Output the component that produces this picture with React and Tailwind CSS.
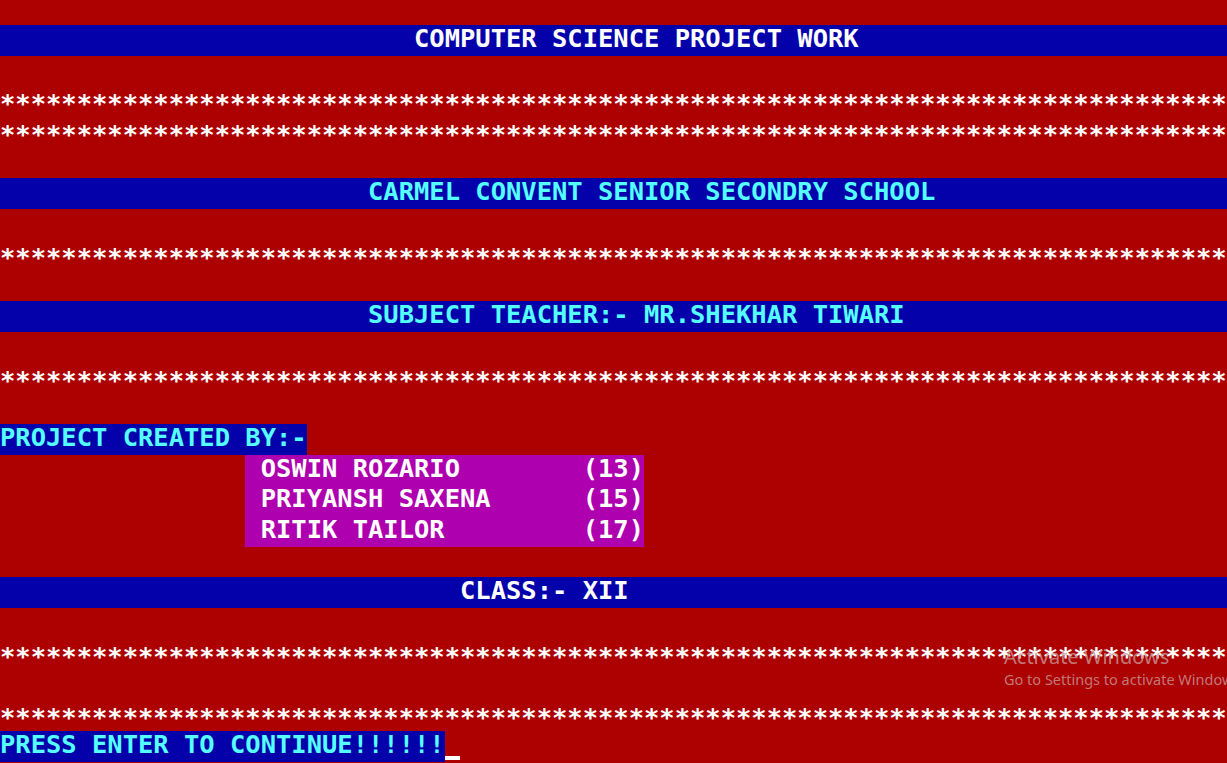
const STARS = '*'.repeat(80)

function Row({ children, className = '' }) {
  return <div className={`h-[30.7px] leading-[27px] whitespace-pre ${className}`}>{children}</div>
}

function Stars() {
  return (
    <Row className="text-white">
      <span className="inline-block translate-y-[4px]">{STARS}</span>
    </Row>
  )
}

const students = [
  ' OSWIN ROZARIO        (13)',
  ' PRIYANSH SAXENA      (15)',
  ' RITIK TAILOR         (17)',
]

export default function App() {
  return (
    <div className="relative w-[1227px] h-[763px] overflow-hidden bg-[#ad0000] pt-[25px] font-['DejaVu_Sans_Mono',monospace] font-bold text-[25.48px]">
      <Row className="bg-[#0400aa] text-white pl-[27ch]">COMPUTER SCIENCE PROJECT WORK</Row>
      <Row />
      <Stars />
      <Stars />
      <Row />
      <Row className="bg-[#0400aa] text-[#55ffff] pl-[24ch]">CARMEL CONVENT SENIOR SECONDRY SCHOOL</Row>
      <Row />
      <Stars />
      <Row />
      <Row className="bg-[#0400aa] text-[#55ffff] pl-[24ch]">SUBJECT TEACHER:- MR.SHEKHAR TIWARI</Row>
      <Row />
      <Stars />
      <Row />
      <Row className="flex">
        <span className="bg-[#0400aa] text-[#55ffff] h-full">PROJECT CREATED BY:-</span>
      </Row>
      {students.map(s => (
        <Row key={s} className="flex pl-[16ch]">
          <span className="bg-[#ae00ae] text-white h-full">{s}</span>
        </Row>
      ))}
      <Row />
      <Row className="bg-[#0400aa] text-white pl-[30ch]">CLASS:- XII</Row>
      <Row />
      <Stars />
      <Row />
      <Stars />
      <Row className="flex">
        <span className="bg-[#0400aa] text-[#55ffff] h-full">PRESS ENTER TO CONTINUE!!!!!!</span>
        <span className="w-[1ch] h-full flex flex-col justify-end pb-[2px]">
          <span className="block h-[4px] bg-white" />
        </span>
      </Row>

      <div className="absolute left-[1004px] top-[645px] font-['Noto_Sans',sans-serif] font-normal text-[#c89a9a]/80 whitespace-nowrap">
        <div className="text-[20px] leading-[24px]">Activate Windows</div>
        <div className="text-[14.5px] leading-[20px]">Go to Settings to activate Windows.</div>
      </div>
    </div>
  )
}
